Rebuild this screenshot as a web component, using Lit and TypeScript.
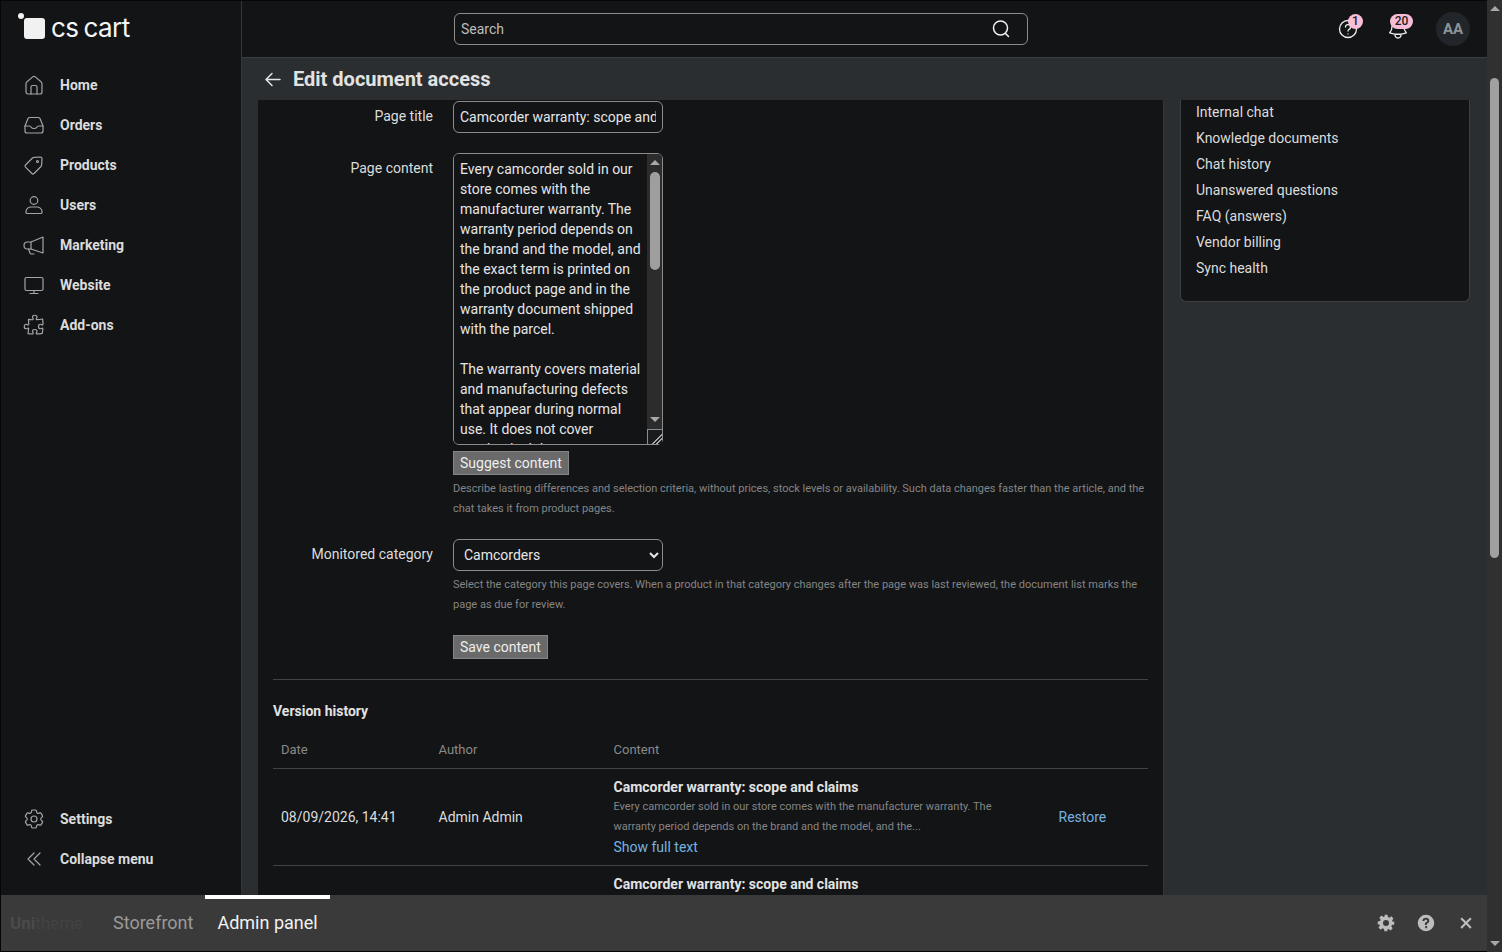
import {LitElement, html, css, svg} from 'lit';
import {customElement} from 'lit/decorators.js';

const PAGE_TEXT = `Every camcorder sold in our store comes with the manufacturer warranty. The warranty period depends on the brand and the model, and the exact term is printed on the product page and in the warranty document shipped with the parcel.

The warranty covers material and manufacturing defects that appear during normal use. It does not cover mechanical damage, moisture, or faults caused by unofficial repairs.

To make a claim, contact the service center named in the warranty document. Keep the receipt and the original packaging until the claim is settled.

If the service center confirms a defect, the camera is repaired or replaced free of charge. Repair times depend on the manufacturer and on the availability of parts.

Accessories such as batteries and memory cards may have a shorter warranty period.`;

const COG = svg`<path d="M9.594 3.94c.09-.542.56-.94 1.11-.94h2.593c.55 0 1.02.398 1.11.94l.213 1.281c.063.374.313.686.645.87.074.04.147.083.22.127.325.196.72.257 1.075.124l1.217-.456a1.125 1.125 0 0 1 1.37.49l1.296 2.247a1.125 1.125 0 0 1-.26 1.431l-1.003.827c-.293.241-.438.613-.43.992a7.723 7.723 0 0 1 0 .255c-.008.378.137.75.43.991l1.004.827c.424.35.534.955.26 1.43l-1.298 2.247a1.125 1.125 0 0 1-1.369.491l-1.217-.456c-.355-.133-.75-.072-1.076.124a6.47 6.47 0 0 1-.22.128c-.331.183-.581.495-.644.869l-.213 1.281c-.09.543-.56.94-1.11.94h-2.594c-.55 0-1.019-.398-1.11-.94l-.213-1.281c-.062-.374-.312-.686-.644-.87a6.52 6.52 0 0 1-.22-.127c-.325-.196-.72-.257-1.076-.124l-1.217.456a1.125 1.125 0 0 1-1.369-.49l-1.297-2.247a1.125 1.125 0 0 1 .26-1.431l1.004-.827c.292-.24.437-.613.43-.991a6.932 6.932 0 0 1 0-.255c.007-.38-.138-.751-.43-.992l-1.004-.827a1.125 1.125 0 0 1-.26-1.43l1.297-2.247a1.125 1.125 0 0 1 1.37-.491l1.216.456c.356.133.751.072 1.076-.124.072-.044.146-.086.22-.128.332-.183.582-.495.644-.869l.214-1.28Z"/><circle cx="12" cy="12" r="3"/>`;

const ICONS = {
  home: svg`<path d="M4 11q0-1.500 1-2.300l5.700-4.800a2 2 0 0 1 2.600 0L19 8.700q1 .8 1 2.300v8a2 2 0 0 1-2 2H6a2 2 0 0 1-2-2z"/><path d="M9 21v-7a1.500 1.500 0 0 1 1.500-1.500h3A1.500 1.500 0 0 1 15 14v7"/>`,
  orders: svg`<path d="M3 13v5a2 2 0 0 0 2 2h14a2 2 0 0 0 2-2v-5l-3-7.500a2 2 0 0 0-1.800-1H7.800a2 2 0 0 0-1.800 1z"/><path d="M3 13h4.500c1 0 1.300.5 1.700 1.200.5.9 1 1.300 2.800 1.300s2.300-.4 2.800-1.300c.4-.7.7-1.200 1.700-1.200H21"/>`,
  products: svg`<path d="M3.500 12l7-7a2 2 0 0 1 1.400-.6L18.500 4A1.500 1.500 0 0 1 20 5.500l-.4 6.600a2 2 0 0 1-.6 1.400l-7 7a1.500 1.500 0 0 1-2.100 0l-6.400-6.400a1.500 1.500 0 0 1 0-2.100z"/><circle cx="15.500" cy="8.500" r="1"/>`,
  users: svg`<circle cx="12" cy="7.500" r="3.800"/><path d="M4 18.500c0-3 3-4.500 5-4.500h6c2 0 5 1.500 5 4.500v1a1 1 0 0 1-1 1H5a1 1 0 0 1-1-1z"/>`,
  marketing: svg`<path d="M21 4L9 9H5.500a3.500 3.500 0 0 0 0 7H9l12 4z"/><path d="M9 9v7"/><path d="M6.500 16l1.500 4q.3 1 1.300 1H12"/>`,
  website: svg`<rect x="3" y="4.500" width="18" height="13" rx="1.500"/><path d="M12 17.500v3M8 20.500h8"/>`,
  addons: svg`<path d="M14.250 6.087c0-.355.186-.676.401-.959.221-.29.349-.634.349-1.003 0-1.036-1.007-1.875-2.250-1.875s-2.250.84-2.250 1.875c0 .369.128.713.349 1.003.215.283.401.604.401.959a.64.64 0 0 1-.657.643 48.390 48.390 0 0 1-4.163-.3c.186 1.613.293 3.250.315 4.907a.656.656 0 0 1-.658.663c-.355 0-.676-.186-.959-.401a1.647 1.647 0 0 0-1.003-.349c-1.036 0-1.875 1.007-1.875 2.250s.84 2.250 1.875 2.250c.369 0 .713-.128 1.003-.349.283-.215.604-.401.959-.401.31 0 .555.26.532.57a48.039 48.039 0 0 1-.642 5.056c1.518.19 3.058.309 4.616.354a.64.64 0 0 0 .657-.643c0-.355-.186-.676-.401-.959a1.647 1.647 0 0 1-.349-1.003c0-1.035 1.008-1.875 2.250-1.875 1.243 0 2.250.84 2.250 1.875 0 .369-.128.713-.349 1.003-.215.283-.4.604-.4.959 0 .333.277.599.61.58a48.100 48.100 0 0 0 5.427-.63 48.050 48.050 0 0 0 .582-4.717.532.532 0 0 0-.533-.57c-.355 0-.676.186-.959.401-.29.221-.634.349-1.003.349-1.035 0-1.875-1.007-1.875-2.250s.84-2.250 1.875-2.250c.37 0 .713.128 1.003.349.283.215.604.401.96.401a.656.656 0 0 0 .658-.663 48.422 48.422 0 0 0-.37-5.360c-1.886.342-3.810.574-5.766.689a.578.578 0 0 1-.61-.58z"/>`,
  settings: COG,
  collapse: svg`<path d="M12 6l-6 6 6 6M18 6l-6 6 6 6"/>`,
};

const NAV_TOP: [keyof typeof ICONS, string][] = [
  ['home', 'Home'],
  ['orders', 'Orders'],
  ['products', 'Products'],
  ['users', 'Users'],
  ['marketing', 'Marketing'],
  ['website', 'Website'],
  ['addons', 'Add-ons'],
];

const NAV_BOTTOM: [keyof typeof ICONS, string][] = [
  ['settings', 'Settings'],
  ['collapse', 'Collapse menu'],
];

const SIDE_LINKS = [
  'Internal chat',
  'Knowledge documents',
  'Chat history',
  'Unanswered questions',
  'FAQ (answers)',
  'Vendor billing',
  'Sync health',
];

@customElement('app-root')
export class AppRoot extends LitElement {
  static override styles = css`
    :host {
      display: flex;
      width: 1502px;
      height: 952px;
      overflow: hidden;
      background: #2b2e30;
      color: #e6e6e6;
      font-family: Roboto, "Liberation Sans", sans-serif;
      font-size: 14px;
      line-height: 20px;
      color-scheme: dark;
    }
    * {
      box-sizing: border-box;
    }

    .shell {
      flex: 1;
      min-width: 0;
      display: flex;
      flex-direction: column;
      border-top: 1px solid #060606;
      border-left: 1px solid #060606;
      border-bottom: 1px solid #060606;
    }
    .workspace {
      flex: 1;
      min-height: 0;
      display: flex;
    }

    .sidebar {
      width: 241px;
      flex: none;
      display: flex;
      flex-direction: column;
      background: #131416;
      border-right: 1px solid #33373a;
    }
    .logo {
      height: 64px;
      flex: none;
      display: flex;
      align-items: flex-start;
      padding: 12px 0 0 17px;
    }
    .logo-mark {
      position: relative;
      width: 21px;
      height: 21px;
      margin: 5px 7px 0 6px;
      border-radius: 3px;
      background: #f1f1f1;
    }
    .logo-mark::before {
      content: '';
      position: absolute;
      left: -6px;
      top: -5px;
      width: 6px;
      height: 6px;
      border-radius: 50%;
      background: #f1f1f1;
    }
    .logo-text {
      margin-left: -1px;
      font-family: Inter, sans-serif;
      font-size: 26px;
      line-height: 30px;
      color: #f5f5f5;
      letter-spacing: -0.5px;
      word-spacing: -2px;
      white-space: nowrap;
    }
    .nav {
      display: flex;
      flex-direction: column;
    }
    .nav-bottom {
      margin-top: auto;
      padding-bottom: 16px;
    }
    .nav-item {
      height: 40px;
      display: flex;
      align-items: center;
      gap: 14px;
      padding-left: 21px;
      font-weight: 700;
      color: #dcdcdc;
    }
    .nav-item svg {
      width: 24px;
      height: 24px;
      fill: none;
      stroke: #a4a4a4;
      stroke-width: 1.2;
      stroke-linecap: round;
      stroke-linejoin: round;
    }

    .right {
      flex: 1;
      min-width: 0;
      display: flex;
      flex-direction: column;
    }
    .topbar {
      height: 57px;
      flex: none;
      display: flex;
      align-items: center;
      background: #131416;
      border-bottom: 1px solid #3a3e40;
      padding: 0 17px 0 212px;
    }
    .search {
      width: 574px;
      height: 32px;
      display: flex;
      align-items: center;
      justify-content: space-between;
      border: 1px solid #8c8c8c;
      border-radius: 6px;
      padding: 0 16px 0 6px;
      color: #bdbdbd;
    }
    .search svg {
      width: 20px;
      height: 20px;
      fill: none;
      stroke: #f0f0f0;
      stroke-width: 1.5;
      stroke-linecap: round;
    }
    .top-icons {
      margin-left: auto;
      display: flex;
      align-items: center;
    }
    .top-icon {
      position: relative;
      width: 24px;
      height: 24px;
      margin-right: 26px;
    }
    .top-icon svg {
      display: block;
      width: 24px;
      height: 24px;
      fill: none;
      stroke: #ececec;
      stroke-width: 1.3;
      stroke-linecap: round;
      stroke-linejoin: round;
    }
    .badge {
      position: absolute;
      top: -3px;
      left: 12px;
      min-width: 15px;
      height: 15px;
      padding: 0 4px;
      border-radius: 8px;
      background: #f9bdd6;
      color: #222;
      font-size: 12px;
      font-weight: 500;
      line-height: 15px;
      text-align: center;
    }
    .badge.wide {
      left: 4px;
      min-width: 23px;
    }
    .avatar {
      width: 34px;
      height: 34px;
      border-radius: 50%;
      background: #22262a;
      color: #8d9499;
      font-weight: 700;
      font-size: 15px;
      line-height: 34px;
      text-align: center;
    }

    .title-band {
      height: 42px;
      flex: none;
      display: flex;
      align-items: center;
      gap: 12px;
      padding-left: 22px;
    }
    .title-band svg {
      width: 17px;
      height: 17px;
      fill: none;
      stroke: #e6e6e6;
      stroke-width: 1.5;
      stroke-linecap: round;
      stroke-linejoin: round;
    }
    .title-band h1 {
      margin: 0;
      font-size: 20px;
      line-height: 24px;
      font-weight: 700;
      color: #e2e2e2;
    }

    .content {
      flex: 1;
      min-height: 0;
      overflow: hidden;
      display: flex;
      align-items: flex-start;
      gap: 16px;
      padding-left: 16px;
    }
    .main-card {
      width: 906px;
      flex: none;
      background: #131416;
      border-right: 1px solid #33373a;
      padding: 1px 15px 0 15px;
    }
    .side-card {
      width: 290px;
      flex: none;
      background: #131416;
      border: 1px solid #3c4043;
      border-top: none;
      border-radius: 0 0 6px 6px;
      padding: 0 15px 20px;
    }
    .side-link {
      height: 26px;
      line-height: 26px;
      color: #dcdcdc;
    }
    .side-link:first-child {
      margin-top: -1px;
    }

    .field {
      display: grid;
      grid-template-columns: 160px 1fr;
      column-gap: 20px;
      margin-bottom: 20px;
    }
    .label {
      text-align: right;
      color: #dcdcdc;
      padding-top: 5px;
    }
    .control {
      display: flex;
      flex-direction: column;
      align-items: flex-start;
    }
    .input,
    .textarea,
    .select {
      width: 210px;
      background: #131416;
      color: #e6e6e6;
      border: 1px solid #8c8c8c;
      border-radius: 6px;
      font: inherit;
      outline: none;
    }
    .input {
      height: 32px;
      padding: 0 6px;
    }
    .textarea-wrap {
      position: relative;
      width: 210px;
      height: 292px;
    }
    .textarea {
      display: block;
      height: 292px;
      padding: 5px 21px 5px 6px;
      line-height: 20px;
    }
    .textarea::-webkit-resizer {
      border-top: 1px solid #8c8c8c;
      border-left: 1px solid #8c8c8c;
      background:
        linear-gradient(135deg, transparent 62%, #a8a8a8 62%, #a8a8a8 68%, transparent 68%, transparent 78%, #a8a8a8 78%, #a8a8a8 84%, transparent 84%),
        #1a1b1d;
    }
    /* headless chrome hides native scrollbars, this one is drawn over the textarea */
    .ta-scroll {
      position: absolute;
      top: 1px;
      right: 1px;
      bottom: 16px;
      width: 15px;
      display: flex;
      flex-direction: column;
      align-items: center;
      background: #2c2c2c;
      border-radius: 0 5px 0 0;
    }
    .ta-scroll .arrow-up {
      margin-top: 6px;
    }
    .ta-scroll .arrow-down {
      margin-bottom: 7px;
    }
    .ta-thumb {
      width: 10px;
      height: 98px;
      flex: none;
      margin-top: 7px;
      border-radius: 5px;
      background: #9e9e9e;
    }
    .select {
      height: 32px;
      padding: 0 6px;
    }
    .btn {
      height: 24px;
      padding: 0 6px;
      background: #6a6a6a;
      color: #eee;
      border: 1px solid #858585;
      border-radius: 0;
      font: inherit;
      line-height: 20px;
    }
    .btn.suggest {
      margin-top: 6px;
    }
    .help {
      width: 695px;
      margin-top: 4px;
      font-size: 11px;
      line-height: 20px;
      color: #858585;
    }
    .actions {
      padding-left: 180px;
      margin: 11px 0 20px;
    }

    .divider {
      height: 1px;
      background: #3f4345;
    }
    h2 {
      margin: 21px 0 18px;
      font-size: 14px;
      line-height: 20px;
      font-weight: 700;
      color: #e2e2e2;
    }
    .versions {
      width: 875px;
      table-layout: fixed;
      border-collapse: collapse;
    }
    .versions th {
      height: 29px;
      padding: 1px 8px 8px;
      text-align: left;
      font-size: 13px;
      font-weight: 400;
      color: #8a8a8a;
      border-bottom: 1px solid #3f4345;
    }
    .versions td {
      padding: 8px;
      vertical-align: middle;
      border-bottom: 1px solid #3f4345;
      color: #dcdcdc;
    }
    .col-date {
      width: 157.5px;
    }
    .col-author {
      width: 175px;
    }
    .col-content {
      width: 445px;
    }
    .ver-title {
      font-weight: 700;
      color: #e2e2e2;
    }
    .ver-text {
      max-width: 400px;
      font-size: 11px;
      line-height: 20px;
      color: #858585;
    }
    .link {
      color: #74b3e0;
      display: block;
    }

    .bottombar {
      height: 56px;
      flex: none;
      display: flex;
      align-items: stretch;
      background: #3a3a3a;
      padding-right: 1px;
    }
    .brand {
      width: 100px;
      padding-left: 9px;
      align-self: center;
      font-size: 17px;
      font-weight: 700;
      color: #4b4b4b;
      line-height: 24px;
    }
    .brand span {
      color: #434343;
      font-weight: 400;
    }
    .tab {
      display: flex;
      align-items: center;
      padding: 0 12px 4px;
      border-top: 4px solid transparent;
      font-size: 18px;
      color: #9a9a9a;
    }
    .tab.active {
      border-top-color: #fff;
      color: #f2f2f2;
    }
    .bar-icons {
      margin-left: auto;
      display: flex;
    }
    .bar-icon {
      width: 40px;
      display: flex;
      align-items: center;
      justify-content: center;
    }
    .bar-icon svg {
      width: 18px;
      height: 18px;
      fill: #bdbdbd;
    }

    .scrollbar {
      width: 15px;
      flex: none;
      display: flex;
      flex-direction: column;
      align-items: center;
      background: #303030;
    }
    .arrow-up,
    .arrow-down {
      width: 0;
      height: 0;
      flex: none;
      border-left: 5px solid transparent;
      border-right: 5px solid transparent;
    }
    .arrow-up {
      margin-top: 6px;
      border-bottom: 5px solid #a8a8a8;
    }
    .arrow-down {
      margin-top: auto;
      margin-bottom: 6px;
      border-top: 5px solid #a8a8a8;
    }
    .thumb {
      width: 9px;
      height: 480px;
      flex: none;
      margin-top: 67px;
      border-radius: 5px;
      background: #a0a0a0;
    }
  `;

  private renderNav(items: [keyof typeof ICONS, string][]) {
    return items.map(
      ([icon, label]) => html`
        <div class="nav-item">
          <svg viewBox="0 0 24 24">${ICONS[icon]}</svg>
          <span>${label}</span>
        </div>
      `
    );
  }

  private renderTopbar() {
    return html`
      <div class="topbar">
        <div class="search">
          <span>Search</span>
          <svg viewBox="0 0 20 20"><circle cx="9.500" cy="9" r="7"/><path d="M14.500 14.500l3 3"/></svg>
        </div>
        <div class="top-icons">
          <div class="top-icon">
            <svg viewBox="0 0 24 24">
              <circle cx="12" cy="12" r="8.500"/>
              <path d="M9.500 10a2.500 2.500 0 1 1 3.600 2.300c-.8.4-1.100.9-1.100 1.700M12 16.800v.1"/>
            </svg>
            <span class="badge">1</span>
          </div>
          <div class="top-icon">
            <svg viewBox="0 0 24 24">
              <path d="M14.857 17.082a23.848 23.848 0 0 0 5.454-1.31A8.967 8.967 0 0 1 18 9.750V9A6 6 0 0 0 6 9v.75a8.967 8.967 0 0 1-2.312 6.022c1.733.64 3.560 1.085 5.455 1.31m5.714 0a24.255 24.255 0 0 1-5.714 0m5.714 0a3 3 0 1 1-5.714 0"/>
            </svg>
            <span class="badge wide">20</span>
          </div>
          <div class="avatar">AA</div>
        </div>
      </div>
    `;
  }

  private renderForm() {
    return html`
      <div class="field">
        <div class="label">Page title</div>
        <div class="control">
          <input class="input" value="Camcorder warranty: scope and claims" />
        </div>
      </div>
      <div class="field">
        <div class="label">Page content</div>
        <div class="control">
          <div class="textarea-wrap">
            <textarea class="textarea" .value=${PAGE_TEXT}></textarea>
            <div class="ta-scroll">
              <div class="arrow-up"></div>
              <div class="ta-thumb"></div>
              <div class="arrow-down"></div>
            </div>
          </div>
          <button class="btn suggest">Suggest content</button>
          <div class="help">
            Describe lasting differences and selection criteria, without prices, stock levels or availability. Such data changes faster than the article, and the chat takes it from product pages.
          </div>
        </div>
      </div>
      <div class="field">
        <div class="label">Monitored category</div>
        <div class="control">
          <select class="select"><option>Camcorders</option></select>
          <div class="help">
            Select the category this page covers. When a product in that category changes after the page was last reviewed, the document list marks the page as due for review.
          </div>
        </div>
      </div>
      <div class="actions"><button class="btn">Save content</button></div>
    `;
  }

  private renderVersions() {
    return html`
      <div class="divider"></div>
      <h2>Version history</h2>
      <table class="versions">
        <colgroup>
          <col class="col-date" />
          <col class="col-author" />
          <col class="col-content" />
          <col />
        </colgroup>
        <thead>
          <tr><th>Date</th><th>Author</th><th>Content</th><th></th></tr>
        </thead>
        <tbody>
          <tr>
            <td>08/09/2026, 14:41</td>
            <td>Admin Admin</td>
            <td>
              <div class="ver-title">Camcorder warranty: scope and claims</div>
              <div class="ver-text">
                Every camcorder sold in our store comes with the manufacturer warranty. The warranty period depends on the brand and the model, and the...
              </div>
              <span class="link">Show full text</span>
            </td>
            <td><span class="link">Restore</span></td>
          </tr>
          <tr>
            <td></td>
            <td></td>
            <td><div class="ver-title">Camcorder warranty: scope and claims</div></td>
            <td></td>
          </tr>
        </tbody>
      </table>
    `;
  }

  override render() {
    return html`
      <div class="shell">
        <div class="workspace">
          <aside class="sidebar">
            <div class="logo">
              <div class="logo-mark"></div>
              <div class="logo-text">cs cart</div>
            </div>
            <nav class="nav">${this.renderNav(NAV_TOP)}</nav>
            <nav class="nav nav-bottom">${this.renderNav(NAV_BOTTOM)}</nav>
          </aside>
          <div class="right">
            ${this.renderTopbar()}
            <div class="title-band">
              <svg viewBox="0 0 17 17"><path d="M16 8.500H2M8 2.500l-6 6 6 6"/></svg>
              <h1>Edit document access</h1>
            </div>
            <div class="content">
              <div class="main-card">${this.renderForm()}${this.renderVersions()}</div>
              <div class="side-card">
                ${SIDE_LINKS.map((l) => html`<div class="side-link">${l}</div>`)}
              </div>
            </div>
          </div>
        </div>
        <div class="bottombar">
          <div class="brand">Uni<span>theme</span></div>
          <div class="tab">Storefront</div>
          <div class="tab active">Admin panel</div>
          <div class="bar-icons">
            <div class="bar-icon">
              <svg viewBox="0 0 24 24"><path fill-rule="evenodd" d="M10 1h4l.6 3.100 1.900.8 2.600-1.800 2.800 2.800-1.800 2.600.8 1.900L23 10v4l-3.100.6-.8 1.900 1.800 2.600-2.800 2.800-2.600-1.800-1.900.8L13.900 23h-4l-.6-3.100-1.900-.8-2.600 1.800-2.800-2.800 1.800-2.600-.8-1.900L1 14v-4l3.100-.6.8-1.900L3.100 4.900l2.800-2.800 2.600 1.800 1.900-.8zM12 8a4 4 0 1 0 0 8 4 4 0 0 0 0-8z"/></svg>
            </div>
            <div class="bar-icon">
              <svg viewBox="0 0 24 24"><path fill-rule="evenodd" d="M12 1a11 11 0 1 1 0 22 11 11 0 0 1 0-22zM11 16v3h2.500v-3zM12 5c-2.800 0-4.600 1.600-4.800 4.200h2.700c.1-1.100.8-1.700 2-1.700 1.100 0 1.800.6 1.800 1.500 0 .8-.4 1.200-1.300 1.800-1.500.9-2 1.800-1.900 3.700h2.500c0-1.100.3-1.500 1.300-2.100 1.400-.9 2.100-1.900 2.100-3.500C16.400 6.500 14.600 5 12 5z"/></svg>
            </div>
            <div class="bar-icon">
              <svg viewBox="0 0 24 24"><path d="M6.500 4.500L12 10l5.500-5.500 2 2L14 12l5.500 5.500-2 2L12 14l-5.500 5.500-2-2L10 12 4.500 6.500z"/></svg>
            </div>
          </div>
        </div>
      </div>
      <div class="scrollbar">
        <div class="arrow-up"></div>
        <div class="thumb"></div>
        <div class="arrow-down"></div>
      </div>
    `;
  }
}

declare global {
  interface HTMLElementTagNameMap {
    'app-root': AppRoot;
  }
}
